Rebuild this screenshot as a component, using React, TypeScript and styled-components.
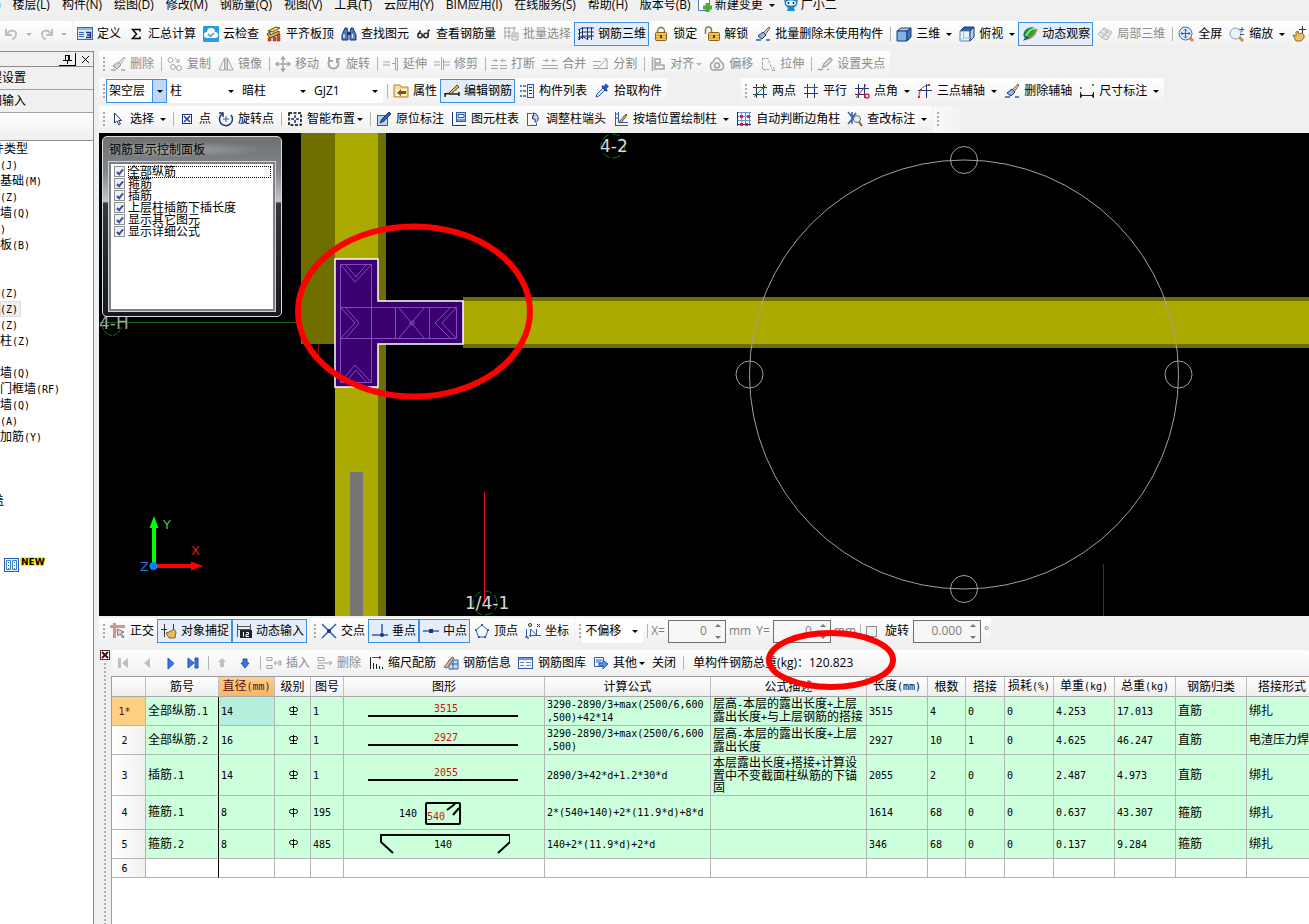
import React from "react";
import styled, { createGlobalStyle, css } from "styled-components";

const GlobalStyle = createGlobalStyle`
  *, *::before, *::after { box-sizing: border-box; }
  body {
    margin: 0;
    background: #f0f0f0;
    color: #000;
    font: 12px/16px "Open Sans", "Noto Sans CJK SC", sans-serif;
    overflow: hidden;
  }
  button, select, input { font: inherit; color: inherit; }
  svg { display: block; flex: none; }
`;

const MONO = `"DejaVu Sans Mono", "Noto Sans CJK SC", monospace`;

/* ---------- icons ---------- */

const blue = "#2c5fae";
const navy = "#1f3470";

const icons: Record<string, React.ReactNode> = {
  undo: <path d="M2 3v6h6M3 8c3-5 9-4 9 0 0 3-2 5-4 5" fill="none" stroke="#888" strokeWidth="2" />,
  redo: <path d="M13 3v6H7M12 8C9 3 3 4 3 8c0 3 2 5 4 5" fill="none" stroke="#888" strokeWidth="2" />,
  define: (
    <>
      <rect x="0.500" y="1.500" width="15" height="12" fill="#dbe8fa" stroke="#3a66b0" />
      <path d="M1 2h14v2H1z" fill="#8fb4e8" />
      <path d="M2 6.500h5M2 8.500h5M2 10.500h5" stroke="#3a66b0" />
      <path d="M9 6.500h4.500v5H9M10 9h3" fill="none" stroke={navy} strokeWidth="1.500" />
    </>
  ),
  sigma: <path d="M12 5.500V3.500H4.500L8.500 8l-4 4.500H12v-2" fill="none" stroke="#000" strokeWidth="1.500" />,
  cloudCheck: (
    <>
      <rect width="16" height="16" rx="1" fill="#2d9be0" />
      <path d="M4 12a3 3 0 0 1 0-6 4 4 0 0 1 8 0 3 3 0 0 1 0 6z" fill="#fff" />
      <path d="M5 8l2.500 2.500L11 7" fill="none" stroke="#2d9be0" strokeWidth="1.500" />
    </>
  ),
  slab: (
    <>
      <path d="M2 5l8-4 4 1-7 4z" fill="#f5d060" stroke="#6a4a10" />
      <path d="M1 8l3-2v3l9-4v3L4 12z" fill="#ecc050" stroke="#4a3210" />
      <path d="M2 12h3v3H2zM7 11h3v4H7zM11 8h3v7h-3z" fill="#c85020" stroke="#7a2a10" strokeWidth="0.500" />
    </>
  ),
  binoculars: (
    <>
      <path d="M4 2h2l1 4v8H1V9zM12 2h-2L9 6v8h6V9z" fill="#4a7ac8" stroke={navy} />
      <path d="M6 6h4v3H6z" fill={navy} />
      <path d="M3 8v4M11.500 8v4" stroke="#d8e8fc" strokeWidth="1.500" />
    </>
  ),
  glasses: (
    <g fill="none" stroke="#333" strokeWidth="1.500">
      <circle cx="4" cy="9.500" r="2.200" /><circle cx="10" cy="9.500" r="2.200" />
      <path d="M6 9.500h2M1.800 9L4.500 4.500M12.200 10.500V4.500L14 4" />
    </g>
  ),
  batch: (
    <>
      <path d="M1 2h12M1 6h7M1 10h7M2 1v12M6 1v12M11 1v5" stroke="#555" fill="none" />
      <path d="M9 7h6v7H9zM10 9h4M10 11h4" stroke="#555" fill="none" />
    </>
  ),
  rebar3d: <path d="M0 4l4-2h12M0 8l4-2h12M0 12l4-2h12M0 14l4-3M1.500 3v11M4.500 1v12M9.500 1v13M13.500 1v13M4 10l5 3 4-3" fill="none" stroke={navy} />,
  lock: (
    <>
      <path d="M4.500 8V5a3.500 3.500 0 0 1 7 0v3" fill="none" stroke="#8a7a50" strokeWidth="1.500" />
      <rect x="2.500" y="6.500" width="11" height="8" rx="1" fill="#f0c850" stroke="#8a6410" />
      <path d="M3 9.500h10M3 12h10" stroke="#d8a030" />
      <path d="M8 9v3" stroke="#5a3a00" strokeWidth="2" />
    </>
  ),
  unlock: (
    <>
      <path d="M1.500 8V4a3 3 0 0 1 6 0v3" fill="none" stroke="#8a7a50" strokeWidth="1.500" />
      <rect x="4.500" y="6.500" width="11" height="8" rx="1" fill="#f0c850" stroke="#8a6410" />
      <path d="M5 9.500h10M5 12h10" stroke="#d8a030" />
      <path d="M10 9v3" stroke="#5a3a00" strokeWidth="2" />
    </>
  ),
  brush: (
    <>
      <path d="M14 1l1 1-5 7-2-2z" fill="#e8c890" stroke="#765" />
      <path d="M8 6l3 3-4 4-4-3z" fill="#8fb4ec" stroke={navy} />
      <path d="M1 14h5M11 14h4" stroke={blue} strokeWidth="1.500" />
    </>
  ),
  cube: (
    <>
      <path d="M1 5l4-3h10l-4 3z" fill="#b8dcf8" stroke={navy} />
      <path d="M1 5h10v10H1z" fill="#7cb4e8" stroke={navy} />
      <path d="M11 5l4-3v9l-4 4z" fill="#3c78b8" stroke={navy} />
    </>
  ),
  cubeTop: (
    <>
      <path d="M1 5l4-4h10l-4 4z" fill="#2864a8" stroke={navy} />
      <path d="M1 5h10v10H1z" fill="#e8f4fc" stroke="#5a8ab8" />
      <path d="M11 5l4-4v10l-4 4z" fill="#a8d0f0" stroke={navy} />
      <path d="M4.500 6v6L1 15M4 12h7" fill="none" stroke="#9bc0dc" />
    </>
  ),
  orbit: (
    <>
      <ellipse cx="8.500" cy="7" rx="6.500" ry="4.500" transform="rotate(-35 8 8)" fill="#28a048" stroke="#186830" />
      <path d="M4 10C7 4 11 2 14 3" stroke="#90f0a0" fill="none" strokeWidth="1.500" />
      <path d="M3 13c5 1 10-4 12-10" stroke="#c88a20" fill="none" strokeWidth="1.500" />
      <path d="M1 15l3-5 3 2z" fill="#205090" />
    </>
  ),
  local3d: (
    <g fill="#ddd" stroke="#777">
      <path d="M1 8l6-6 4 2-6 8zM5 12l6-8 4 2-5 8z" /><path d="M3 6l9 5M6 3l7 5" />
    </g>
  ),
  fullscreen: (
    <>
      <path d="M11 11l4 4" stroke="#c89040" strokeWidth="3" />
      <circle cx="7.500" cy="7.500" r="6.500" fill="#dceafc" stroke="#4a6a9a" />
      <path d="M7.500 3v9M3 7.500h9M6 4.500L7.500 3 9 4.500M6 10.500L7.500 12 9 10.500M4.500 6L3 7.500 4.500 9M10.500 6L12 7.500 10.500 9" fill="none" stroke={blue} />
    </>
  ),
  zoom: (
    <>
      <path d="M10 11l4 4" stroke="#c89040" strokeWidth="3" />
      <circle cx="6.500" cy="7.500" r="5.500" fill="#e8f2fc" stroke="#8a9ab0" />
      <path d="M13 1v5M10.500 3.500h5M11 8.500h4" stroke={blue} />
    </>
  ),
  hand: (
    <>
      <path d="M1 9l3 1V6l2-1 1 3 3-1 2 2v3l-3 3H4z" fill="#ecc06a" stroke="#9a6a20" />
      <path d="M10.500 0v7M7 3.500h7" stroke="#333" />
    </>
  ),
  copy: (
    <g fill="none" stroke="#555">
      <circle cx="3.500" cy="4" r="2.500" /><circle cx="6" cy="11" r="2.500" /><circle cx="12" cy="12" r="2.500" /><path d="M8 2l4 4M12 3v3H9" />
    </g>
  ),
  mirror: <path d="M6.500 2v12H1zM9.500 2v12H15zM8 1v14" fill="none" stroke="#555" />,
  move: <path d="M8 1v14M1 8h14M6 3.500L8 1l2 2.500M6 12.500L8 15l2-2.500M3.500 6L1 8l2.500 2M12.500 6L15 8l-2.500 2" fill="none" stroke="#555" strokeWidth="1.500" />,
  rotate: <path d="M4 4a5 5 0 1 0 7 0M3 1v4h4M11 7V3h3" fill="none" stroke="#555" strokeWidth="2" />,
  extend: <path d="M0 6h7M0 9h7M9 7.500h3M12.500 2v12h2V2z" fill="none" stroke="#555" />,
  trim: <path d="M0 6h6M0 9h6M10 6h6M10 9h6M7.500 1v13M9.500 3v11" fill="none" stroke="#555" />,
  breakIt: <path d="M0 9.500h7M9 9.500h7M0 12.500h7M9 12.500h7M1 4.500h5M10 4.500h5M4 2.500l2 2-2 2M12 2.500l-2 2 2 2" fill="none" stroke="#555" />,
  merge: <path d="M0 9.500h16M0 12.500h16M1 4.500h5M10 4.500h5M4 2.500l2 2-2 2M12 2.500l-2 2 2 2" fill="none" stroke="#555" />,
  split: <path d="M0 5.500h8M0 12.500h15M0 9.500h5M5 12L14 2M14 4v9M11 2l4 3" fill="none" stroke="#555" />,
  align: <path d="M2.500 1v14M5 3h5v4H5zM5 9h9v4H5z" fill="none" stroke="#555" strokeWidth="1.500" />,
  offset: (
    <g fill="none" stroke="#555" strokeWidth="1.500">
      <path d="M8 2c3 0 3 3 4 4 4 2 3 8-1 8H5c-4 0-5-6-1-8 1-1 1-4 4-4z" /><circle cx="8" cy="9.500" r="2.500" />
    </g>
  ),
  stretch: <path d="M2.500 2v11.500H9M2 2.500h6l4 11M12 14.500h3M13 11l2 3" fill="none" stroke="#555" strokeDasharray="3 1" />,
  grip: <path d="M1 13.500h5M13 2L7 8l-1 3 3-1 6-6zM10 13.500h2" fill="none" stroke="#555" strokeWidth="1.500" />,
  props: (
    <>
      <path d="M1 2h6l1 2h7v10H1z" fill="#f8dc90" stroke="#b08830" />
      <path d="M3 6h10v7H3z" fill="#fff6d8" />
      <path d="M4 10l4-4v2h5v3H8v2z" fill="#7a5418" />
    </>
  ),
  editBar: (
    <>
      <path d="M1 12c2-3 4-1 5-1h9M1 10v4M15 9v4" fill="none" stroke="#222" strokeWidth="1.500" />
      <path d="M5 10l8-8 2 2-8 7z" fill="#e8b860" stroke="#5a4010" />
    </>
  ),
  list: (
    <>
      <path d="M1 3h2M1 8h2M1 13h2M4 3h3M4 8h3M4 13h3" stroke={blue} strokeWidth="1.500" />
      <rect x="8.500" y="1.500" width="6" height="13" fill="#e8f1fc" stroke={blue} />
      <path d="M10 4.500h3M10 7.500h3M10 10.500h3" stroke={navy} />
    </>
  ),
  dropper: (
    <>
      <path d="M2 14l1-3 6-6 2 2-6 6z" fill="#cfe4fa" stroke={blue} />
      <path d="M8 3l5 5" stroke={navy} strokeWidth="2" />
      <path d="M10 5.500L13.500 2" stroke="#2858b8" strokeWidth="4" />
    </>
  ),
  axis2: (
    <>
      <path d="M1 4.500h14M1 11.500h14M4.500 1v14M11.500 1v14" stroke={navy} />
      <path d="M2 14L14 2" stroke="#3a8a3a" />
      <path d="M4 4h1M11 11h1" stroke="#d02020" strokeWidth="2" />
    </>
  ),
  parallel: (
    <>
      <path d="M4.500 1v14M11.500 1v14" stroke={navy} />
      <path d="M1 4.500h14" stroke="#c02040" />
      <path d="M1 10.500h14" stroke={navy} />
    </>
  ),
  angle: (
    <>
      <path d="M1 5.500h14M1 11.500h10M4.500 1v14M10.500 1v14" stroke={navy} />
      <path d="M2 15L12 2" stroke="#c02040" />
      <circle cx="13" cy="13" r="2" fill="none" stroke="#e02040" strokeWidth="1.500" />
    </>
  ),
  arc3: (
    <>
      <path d="M1 7.500h14M9.500 1v14" stroke={navy} />
      <path d="M2 14C2 7 5 3 12 2" fill="none" stroke="#d02020" />
      <path d="M1 13h2v2H1zM3 6h2v2H3zM11 1h2v2h-2z" fill="#d02020" />
    </>
  ),
  dimension: (
    <>
      <path d="M1.500 9v6M14.500 9v6M1 12.500h14M3 11l-2 1.500L3 14M13 11l2 1.500L13 14" fill="none" stroke="#222" />
      <path d="M1 4h2v2H1zM13 1h2v2h-2z" fill="#3aa04a" />
    </>
  ),
  pointer: <path d="M4.500 2v10l2.500-2 2 4 1.500-1-2-3.500h3z" fill="#fff" stroke={navy} />,
  point: (
    <>
      <rect x="3.500" y="3.500" width="9" height="9" fill="#fff" stroke={navy} />
      <path d="M5 5l6 6M11 5l-6 6" stroke="#2030c0" strokeWidth="1.500" />
    </>
  ),
  rotatePoint: (
    <>
      <path d="M4 3a6.500 6.500 0 1 0 9 1M1 2h4v4" fill="none" stroke={navy} strokeWidth="1.500" />
      <path d="M8 5v6M5 8h6" stroke={blue} />
    </>
  ),
  smart: (
    <>
      <rect x="2" y="2" width="12" height="12" fill="none" stroke="#000" strokeWidth="1.500" strokeDasharray="3 1.500" />
      <path d="M8 4v3M8 9v3M4 8h3M9 8h3" stroke={navy} strokeWidth="1.500" />
    </>
  ),
  annotate: (
    <>
      <rect x="1.500" y="4.500" width="10" height="10" fill="#b9d2f0" stroke={blue} />
      <path d="M4 12l2-4 7-7 2 2-7 7z" fill="#2c5fae" stroke={navy} />
    </>
  ),
  table: (
    <>
      <path d="M1.500 1v13.500H15" fill="none" stroke={navy} />
      <rect x="5.500" y="1.500" width="9" height="9" fill="#c8dcf8" stroke={blue} />
      <path d="M7 3.500h6v3H7z" fill="#fff" stroke={blue} />
      <path d="M6 9h8" stroke={blue} />
    </>
  ),
  adjust: (
    <>
      <path d="M1.500 2v12.500h9V12M1.500 2.500H6" fill="none" stroke={blue} />
      <path d="M7 2c6 0 7 9 2 9V8H6.500V5H8z" fill="#c8dcf8" stroke={navy} />
    </>
  ),
  wall: (
    <>
      <path d="M2.500 1v14M5.500 1v10.500H15M2 14.500h13M2 3h4M2 7h4" fill="none" stroke={blue} />
      <path d="M6 11L13 3l1 1-6 8z" fill="#e8b860" stroke="#6a4818" />
    </>
  ),
  autoCol: (
    <>
      <path d="M1 1.500h14M1 5.500h14M1 9.500h14M1.500 1v14M5.500 1v14M9.500 1v14M13.500 1v14M1 13.500h14" stroke="#6a92d0" />
      <path d="M1 13.500h14M1.500 1v14" stroke={navy} />
      <path d="M4 4h3v3H4zM11 4h3v3h-3zM4 12h3v3H4zM9 12h3v3H9z" fill="#e02030" />
    </>
  ),
  inspect: (
    <>
      <path d="M1 1l5 6-5 6M5 1v12M5 7l4-5" fill="none" stroke={blue} strokeWidth="1.500" />
      <circle cx="10" cy="8" r="3.500" fill="#e0f0fc" stroke="#666" />
      <path d="M12 11l3 4" stroke="#8a5a20" strokeWidth="2" />
    </>
  ),
  newDoc: (
    <>
      <path d="M1.500 0v13.500h11V0" fill="#fff" stroke="#4a80c0" />
      <path d="M10.500 6v9M6 10.500h9" stroke="#48b030" strokeWidth="4" />
    </>
  ),
  mascot: (
    <>
      <path d="M1 2l2-2h10l2 2-1 6-3 3 1 3H4l1-3-3-3z" fill="#1e88d8" />
      <ellipse cx="8" cy="6" rx="5" ry="2.500" fill="#fff" />
      <path d="M5.500 5v2M10.500 5v2" stroke="#111" strokeWidth="1.500" />
    </>
  ),
  ortho: (
    <>
      <path d="M0 3.500h15M4.500 0v15" stroke="#d89090" strokeWidth="3" />
      <path d="M7 6l7 3-3 1 3 4-1 1-3-4-2 2z" fill="#ddd" stroke="#777" />
    </>
  ),
  snap: (
    <>
      <path d="M3.500 1v13M0 6.500h6M12.500 1v6" stroke="#333" />
      <path d="M5 10l3-1 5-3 2 3-1 6H8z" fill="#e8b860" stroke="#8a6420" />
    </>
  ),
  dynIn: (
    <>
      <path d="M1.500 1v13M1 3.500h14M14.500 1v5M1 6.500h14" stroke="#555" />
      <rect x="4" y="7" width="12" height="8" fill="#222" />
      <path d="M7.500 9v4.500M10 9.500h2.500v2H10v2h3" fill="none" stroke="#fff" />
    </>
  ),
  cross: (
    <>
      <path d="M1 1l14 14M15 1L1 15" stroke={blue} strokeWidth="1.500" />
      <circle cx="8" cy="8" r="2" fill={navy} />
    </>
  ),
  perp: (
    <>
      <path d="M10 1v11M0 12h16" stroke={blue} strokeWidth="1.500" />
      <circle cx="10" cy="12" r="2" fill={navy} />
    </>
  ),
  mid: (
    <>
      <path d="M0 8h16" stroke={blue} strokeWidth="1.500" />
      <rect x="6" y="6" width="4" height="4" fill={navy} />
    </>
  ),
  vertex: (
    <>
      <path d="M8 2l6 5-2.500 7h-7L2 7z" fill="none" stroke={blue} />
      <path d="M7 1h2v2H7zM13 6h2v2h-2zM1 6h2v2H1zM4 13h2v2H4zM10 13h2v2h-2z" fill={blue} />
    </>
  ),
  coord: (
    <>
      <path d="M1.500 6v8M5.500 14V6l6 6V6M4 12.500h12" fill="none" stroke={blue} />
      <path d="M12 1l3 3M15 1l-3 3M0 14h3v2" fill="none" stroke="#333" />
      <circle cx="5" cy="2" r="1.500" fill="none" stroke="#333" />
    </>
  ),
  first: <path d="M2 3h3v10H2zM12 3v10L6 8z" fill="#888" />,
  prev: <path d="M11 3v10L5 8z" fill="#888" />,
  next: <path d="M6 3v11l6-5.500z" fill="#3a78e0" stroke="#1f50b0" />,
  last: <path d="M3 3v10l6-5zM10 3h3v10h-3z" fill="#3a78e0" stroke="#1f50b0" />,
  up: <path d="M8 3l4 4h-2v5H6V7H4z" fill="#888" />,
  down: <path d="M8 13l4-5h-2V4H6v4H4z" fill="#3a78e0" stroke="#1f50b0" />,
  insert: <path d="M1 2.500h5v3H1zM1 10.500h5v3H1zM8 8h7M10 6L8 8l2 2M12 6h3v4h-3" fill="none" stroke="#555" />,
  remove: <path d="M1 2.500h6v3H1zM1 10.500h6v3H1zM1 8h14M12 6l3 2-3 2" fill="none" stroke="#555" />,
  scale: (
    <>
      <path d="M2.500 2v12M5.500 8v6M8.500 9v5M11.500 11v3M14.500 12v2" stroke="#222" />
      <path d="M4 2.500h9M11 1l2 1.500L11 4" fill="none" stroke="#c02020" />
    </>
  ),
  info: (
    <>
      <path d="M6 5h9v9H6zM6 9h9M10 5v9" fill="#c8dcf8" stroke={blue} />
      <path d="M1 12l8-10 2 1-7 10z" fill="#e8b880" stroke="#666" />
    </>
  ),
  library: (
    <>
      <rect x="0.500" y="2.500" width="14" height="11" fill="#f4f8fe" stroke={blue} />
      <path d="M1 4h13" stroke="#6a9ae0" strokeWidth="2" />
      <path d="M2 7.500h4M8 7.500h5M2 10.500h4M8 10.500h5" stroke="#789" />
    </>
  ),
  other: (
    <>
      <path d="M1.500 2.500h9v9h-9zM3 5h6M3 7h5" fill="#f0f4fc" stroke={blue} />
      <path d="M6 8h4V5l5 4-5 5v-3H6z" fill="#5a90e8" stroke={blue} />
    </>
  ),
  column: (
    <>
      <rect x="0.500" y="1.500" width="14" height="13" fill="#e4f1ff" stroke={blue} />
      <path d="M2.500 3.500h4v9h-4zM8.500 3.500h4v9h-4z" fill="#fff" stroke="#3c80d0" />
      <path d="M4.500 5v7M10.500 5v7" stroke={blue} strokeDasharray="1 2" />
    </>
  ),
};

const Icon = ({ name }: { name: string }) => (
  <svg width="16" height="16" viewBox="0 0 16 16" overflow="visible" aria-hidden="true">{icons[name]}</svg>
);

/* ---------- shared parts ---------- */

const Page = styled.div`
  min-height: 100vh;
  display: flex;
  flex-direction: column;
`;

const MenuBar = styled.nav`
  display: flex;
  gap: 6px;
  height: 20px;
  margin-left: -3px;
  padding-bottom: 10px;
  line-height: 10px;
  align-items: center;
  white-space: nowrap;
`;

const MenuGroup = styled.div<{ $gap: number }>`
  display: flex;
  gap: ${(p) => p.$gap}px;
`;

const MenuItem = styled.button`
  display: flex;
  align-items: center;
  gap: 2px;
  height: 10px;
  padding: 0;
  border: 0;
  background: none;
`;

const Strip = styled.div<{ $h?: number }>`
  display: flex;
  align-items: center;
  gap: 1px;
  height: ${(p) => p.$h ?? 28}px;
`;

const Bar = styled.div<{ $fill?: boolean; $start?: boolean }>`
  display: flex;
  align-items: center;
  flex: ${(p) => (p.$fill ? "1 0 auto" : "none")};
  height: 26px;
  padding-right: 2px;
  padding-left: ${(p) => (p.$start ? 0 : 2)}px;
  background: linear-gradient(#fff, #f8f8f8 50%, #efefef);
  border-radius: 2px;
`;

const EmptyBar = styled(Bar)`
  width: 32px;
  background: linear-gradient(90deg, #fafafa, #f0f0f0);
`;

const Gap = styled.div`
  width: 72px;
`;

const Grip = styled.span`
  flex: none;
  width: 5px;
  height: 16px;
  background: radial-gradient(circle at 3px 2px, #aaa 1px, transparent 1px) 0 0 / 5px 4px;
`;

const Sep = styled.span`
  flex: none;
  width: 6px;
  height: 14px;
  border-right: 1px solid #b5b5b5;
  margin-right: 1px;
  margin-left: -1px;
`;

const ToolButton = styled.button<{ $on?: boolean }>`
  display: flex;
  align-items: center;
  flex: none;
  gap: 4px;
  height: 24px;
  padding: 0 2px 0 3px;
  border: 1px solid transparent;
  background: none;
  white-space: nowrap;
  ${(p) => p.$on && css`
    border-color: #3f8fe0;
    background: #e4eefa;
  `}
  &:disabled {
    color: #8c8c8c;
  }
  &:disabled svg {
    filter: grayscale(1);
    opacity: 0.5;
  }
`;

const ArrowSlot = styled.span<{ $w: number }>`
  display: grid;
  align-items: center;
  justify-content: end;
  width: ${(p) => p.$w}px;
  margin-left: -4px;
`;

const Arrow = ({ dim }: { dim?: boolean }) => (
  <svg width="6" height="3" viewBox="0 0 6 3" aria-hidden="true"><path d="M0 0h6L3 3z" fill={dim ? "#777" : "#000"} /></svg>
);

type ToolProps = { icon?: string; label?: string; name?: string; on?: boolean; off?: boolean; drop?: "split" | "menu" };

const Tool = ({ icon, label, name, on, off, drop }: ToolProps) => (
  <ToolButton $on={on} disabled={off} aria-pressed={on} aria-label={label ? undefined : name}>
    {icon && <Icon name={icon} />}
    {label}
    {drop && <ArrowSlot $w={drop === "split" ? 12 : 8}><Arrow dim={off} /></ArrowSlot>}
  </ToolButton>
);

const Tools = ({ items }: { items: (ToolProps | "|")[] }) => (
  <>{items.map((t, i) => (t === "|" ? <Sep key={i} /> : <Tool key={i} {...t} />))}</>
);

const ComboBox = styled.span<{ $w: number; $active?: boolean }>`
  display: grid;
  align-items: center;
  width: ${(p) => p.$w}px;
  height: 24px;
  border: 1px solid ${(p) => (p.$active ? "#3f8fe0" : "transparent")};
  background: #fff;
  & > * { grid-area: 1 / 1; }
`;

const ComboSelect = styled.select`
  width: 100%;
  height: 22px;
  padding: 0 0 0 2px;
  border: 0;
  appearance: none;
  background: none;
`;

const ComboArrow = styled.span<{ $active?: boolean }>`
  display: grid;
  place-items: center;
  justify-self: end;
  width: 14px;
  height: 22px;
  pointer-events: none;
  ${(p) => p.$active && css`
    background: #bcd9fb;
    border-left: 1px solid #3f8fe0;
  `}
`;

const Combo = ({ value, w, active, name }: { value: string; w: number; active?: boolean; name: string }) => (
  <ComboBox $w={w} $active={active}>
    <ComboSelect aria-label={name}><option>{value}</option></ComboSelect>
    <ComboArrow $active={active}><Arrow /></ComboArrow>
  </ComboBox>
);

const Latin = styled.span`
  font-size: 10px;
`;

/* Half-width runs are set smaller so that each takes half of a Chinese glyph. */
const Mix = ({ text }: { text: string }) => (
  <>
    {text.split(/([\x20-\x7e]+)/).filter(Boolean).map((part, i) =>
      /^[\x20-\x7e]/.test(part) ? <Latin key={i}>{part}</Latin> : part
    )}
  </>
);

/* ---------- left panel ---------- */

const Body = styled.div`
  flex: 1;
  display: grid;
  grid-template-columns: 94px minmax(0, 1fr);
  column-gap: 5px;
  margin-top: 3px;
`;

const Side = styled.aside`
  display: flex;
  flex-direction: column;
  border-right: 1px solid #8c8c8c;
  overflow: hidden;
  font-family: ${MONO};
`;

const SideHead = styled.div`
  display: flex;
  justify-content: flex-end;
  align-items: center;
  gap: 4px;
  height: 16px;
  padding-right: 3px;
  border-top: 1px solid #8c8c8c;
  border-bottom: 1px solid #8c8c8c;
`;

const HeadButton = styled.button<{ $raised?: boolean }>`
  display: grid;
  place-items: center;
  width: ${(p) => (p.$raised ? 17 : 10)}px;
  height: 13px;
  padding: 0;
  border: 0;
  background: none;
  ${(p) => p.$raised && css`box-shadow: inset -1px -1px #000;`}
`;

const SideTab = styled.button`
  height: 23px;
  padding: 0;
  border: 0;
  border-bottom: 1px solid #a0a0a0;
  background: #f0f0f0;
  text-align: left;
  text-indent: -10px;
  white-space: nowrap;
`;

const SideTools = styled.div`
  height: 27px;
  background: linear-gradient(#fff, #efefef);
`;

const Tree = styled.ul`
  flex: 1;
  margin: 0;
  padding: 0;
  border-top: 1px solid #8c8c8c;
  background: #fff;
  list-style: none;
`;

const TreeItem = styled.li<{ $cut?: boolean; $sel?: boolean }>`
  width: max-content;
  height: 16px;
  line-height: 16px;
  text-indent: ${(p) => (p.$cut ? -8 : 0)}px;
  white-space: nowrap;
  ${(p) => p.$sel && css`
    padding-right: 3px;
    background: #f0f0f0;
    box-shadow: inset 0 0 0 1px #dcdcdc;
  `}
`;

const NewItem = styled.li`
  display: flex;
  gap: 1px;
  padding: 48px 0 0 4px;
`;

const NewTag = styled.b`
  font: bold 9px/10px "DejaVu Sans", sans-serif;
  text-shadow: 0 0 1px #fe0, 1px 1px #fe0, -1px -1px #fe0, 1px -1px #fe0, -1px 1px #fe0;
`;

const treeRows = ["件类型", "(J)", "基础(M)", "(Z)", "墙(Q)", ")", "板(B)", "", "", "(Z)", "(Z)", "(Z)", "柱(Z)", "", "墙(Q)", "门框墙(RF)", "墙(Q)", "(A)", "加筋(Y)", "", "", "", "盖"];

/* ---------- drawing area ---------- */

const Main = styled.main`
  display: flex;
  flex-direction: column;
  min-width: 0;
`;

const Canvas = styled.div`
  position: relative;
  height: 483px;
  background: #000;
  overflow: hidden;
`;

const Panel = styled.section`
  position: absolute;
  top: 3px;
  left: 3px;
  width: 180px;
  height: 181px;
  padding: 4px 6px 5px;
  display: flex;
  flex-direction: column;
  gap: 4px;
  border: 1px solid #d8dcdf;
  border-radius: 5px;
  background: linear-gradient(#6e7173, #85888a 20%, #c4c7c9 36%, #35383c 37%, #23272c 70%, #16191e);
`;

const PanelTitle = styled.h2`
  margin: 0;
  height: 17px;
  font: 12px/17px "Open Sans", "Noto Sans CJK SC", sans-serif;
  background: radial-gradient(ellipse at 35% 50%, #a2a4a6, transparent 65%);
`;

const PanelList = styled.div`
  flex: 1;
  padding: 2px 2px 2px 1px;
  border: 2px solid #7d8185;
  outline: 1px solid #d0d3d5;
  background: #fff;
`;

const CheckRow = styled.label<{ $focus?: boolean }>`
  display: flex;
  gap: 3px;
  height: 12px;
  line-height: 12px;
  padding-left: 2px;
  span {
    flex: 1;
    outline: ${(p) => (p.$focus ? "1px dotted #000" : "none")};
    outline-offset: -1px;
    white-space: nowrap;
  }
`;

const Tick = styled.input`
  flex: none;
  appearance: none;
  display: grid;
  place-items: center;
  width: 11px;
  height: 11px;
  margin: 0;
  border: 1px solid #8e8f8f;
  background: #eef1f5;
  &:checked::after {
    content: "";
    width: 4px;
    height: 7px;
    border: solid #3b4f9a;
    border-width: 0 2px 2px 0;
    transform: rotate(40deg);
  }
`;

const checks = ["全部纵筋", "箍筋", "插筋", "上层柱插筋下插长度", "显示其它图元", "显示详细公式"];

const Drawing = () => (
  <svg width="100%" height="483" fontFamily="DejaVu Sans, sans-serif">
    <path d="M0 189.500h202" stroke="#0c6a14" />
    <path d="M3 194l4 6 6 3 6-3 4-6" fill="none" stroke="#0c7a14" strokeDasharray="4 1" />
    <rect x="202" y="0" width="34" height="211" fill="#6f6f00" />
    <rect x="236" y="0" width="43" height="483" fill="#aaaa00" />
    <rect x="279" y="0" width="8" height="483" fill="#6f6f00" />
    <svg x="364" y="164" width="100%" height="51">
      <rect width="100%" height="51" fill="#6f6f00" />
      <rect y="4" width="100%" height="43" fill="#aaaa00" />
    </svg>
    <rect x="251" y="339" width="13" height="144" fill="#757575" />
    <path d="M219.500 211v12" stroke="#7a1000" />
    <path d="M236 126h43v42h85v43h-85v43h-43z" fill="#3a0070" stroke="#fff" strokeWidth="1.500" />
    <g fill="none" stroke="#8448c4">
      <path d="M241.500 131.500h31v118h-31zM241.500 174.500h116v31h-116zM296.500 174v31M330.500 174v31" />
      <path d="M242 132l14 17 16-17M247 132l10 12 10-12M242 249l14-17 16 17M247 249l10-12 10 12" />
      <path d="M242 175l14 15-14 15M247 175l13 15-13 15M357 175l-14 15 14 15M351 175l-15 15 15 15" />
      <path d="M300 175l25 30M325 175l-25 30" />
      <circle cx="313" cy="190" r="2" />
    </g>
    <g fill="none" stroke="#a0a0a0">
      <circle cx="865" cy="241.500" r="214.500" />
      <circle cx="865" cy="27" r="13.500" />
      <circle cx="1079.500" cy="241.500" r="13.500" />
      <circle cx="865" cy="456" r="13.500" />
      <circle cx="650.500" cy="241.500" r="13.500" />
    </g>
    <g fill="none" stroke="#0c7a14">
      <circle cx="514" cy="13" r="12" strokeDasharray="8 3" />
      <circle cx="386" cy="470" r="12" strokeDasharray="8 3" />
    </g>
    <path d="M385.500 359v112" stroke="#e01020" />
    <path d="M1004.500 431v52" stroke="#a80010" />
    <g fill="#d8d8d8" fontSize="17">
      <text x="501" y="19">4-2</text>
      <text x="366" y="476">1/4-1</text>
      <text x="0" y="196" fill="#a0a0a0">4-H</text>
    </g>
    <path d="M55 433v-40" stroke="#0f0" strokeWidth="4" />
    <path d="M50.500 395L55 383l4.500 12z" fill="#0f0" />
    <path d="M55 433h40" stroke="#f00" strokeWidth="4" />
    <path d="M92 428.500l12 4.500-12 4.500z" fill="#f00" />
    <circle cx="54.500" cy="433" r="4" fill="#0a80ff" />
    <g fontSize="13">
      <text x="64" y="396" fill="#40c840">Y</text>
      <text x="92" y="422" fill="#d02020">X</text>
      <text x="41" y="438" fill="#2870d0">Z</text>
    </g>
    <ellipse cx="315" cy="178.500" rx="116" ry="85" fill="none" stroke="#f00" strokeWidth="6" />
  </svg>
);

/* ---------- status and edit bars ---------- */

const Lower = styled.section`
  position: relative;
  flex: 1;
  display: flex;
  flex-direction: column;
`;

const Ring = styled.svg`
  position: absolute;
  top: 13px;
  left: 666px;
  pointer-events: none;
`;

const Field = styled.label`
  display: flex;
  align-items: center;
  gap: 3px;
  padding-left: 2px;
  color: #808080;
`;

const SpinBox = styled.span<{ $w: number }>`
  display: flex;
  width: ${(p) => p.$w}px;
  height: 23px;
  border: 1px solid #6e6e6e;
  background: #f6f6f6;
`;

const SpinInput = styled.input`
  flex: 1;
  min-width: 0;
  padding: 0 4px 0 0;
  border: 0;
  background: none;
  text-align: right;
`;

const SpinArrows = styled.span`
  display: flex;
  flex-direction: column;
  justify-content: space-between;
  align-items: center;
  width: 14px;
  padding: 3px 0;
  svg:first-child { transform: rotate(180deg); }
`;

const Spin = ({ w, value, name }: { w: number; value: string; name: string }) => (
  <SpinBox $w={w}>
    <SpinInput aria-label={name} defaultValue={value} />
    <SpinArrows><Arrow dim /><Arrow dim /></SpinArrows>
  </SpinBox>
);

const RotateCheck = styled.label`
  display: flex;
  align-items: center;
  gap: 8px;
  padding: 0 2px 0 4px;
`;

const Dock = styled.div`
  flex: 1;
  display: grid;
  grid-template-columns: 13px minmax(0, 1fr);
  margin-top: 4px;
`;

const DockEdge = styled.div`
  display: flex;
  flex-direction: column;
  gap: 2px;
  padding: 0 1px;
  &::after {
    content: "";
    flex: 1;
    margin: 0 3px;
    background: radial-gradient(circle at 2px 2px, #b0b0b0 1px, transparent 1px) 0 0 / 4px 4px;
  }
`;

const DockClose = styled.button`
  width: 10px;
  height: 10px;
  padding: 0;
  border: 1px solid #4a3030;
  background: #fff;
`;

const DockMain = styled.div`
  min-width: 0;
  display: flex;
  flex-direction: column;
`;

const Total = styled.output`
  padding-left: 8px;
  white-space: nowrap;
`;

/* ---------- rebar table ---------- */

const TableArea = styled.div`
  flex: 1;
  overflow: hidden;
  border-top: 1px solid #9c9c9c;
  border-left: 1px solid #9c9c9c;
  margin-left: -1px;
  background: #fff;
`;

const Grid = styled.table`
  width: 1206px;
  table-layout: fixed;
  border-spacing: 0;
  font: 12px/12px ${MONO};
`;

const ColHead = styled.th<{ $sel?: boolean }>`
  height: 20px;
  padding: 0;
  border-right: 1px solid #c0c0c0;
  border-bottom: 1px solid #a8a8a8;
  background: ${(p) => (p.$sel ? "linear-gradient(#fbd08c, #f5b765)" : "linear-gradient(#fff, #eee)")};
  color: ${(p) => (p.$sel ? "#5a1010" : "#000")};
  font-weight: normal;
  white-space: nowrap;
`;

const RowHead = styled.th<{ $sel?: boolean }>`
  padding: 0 8px 0 0;
  border-right: 1px solid #b4b4b4;
  border-bottom: 1px solid #b4b4b4;
  background: ${(p) => (p.$sel ? "#ffcf82" : "linear-gradient(90deg, #fff, #f0f0f0)")};
  color: ${(p) => (p.$sel ? "#5a1010" : "#000")};
  font-weight: normal;
`;

const Cell = styled.td<{ $center?: boolean; $edge?: boolean; $now?: boolean; $blank?: boolean }>`
  padding: 0 0 0 ${(p) => (p.$center ? 0 : 2)}px;
  border-right: 1px solid ${(p) => (p.$edge ? "#000" : "#b4b4b4")};
  border-bottom: 1px solid #b4b4b4;
  background: ${(p) => (p.$blank ? "#fff" : p.$now ? "#b5eedd" : "#ccffdb")};
  text-align: ${(p) => (p.$center ? "center" : "left")};
  white-space: pre;
  svg { margin: 0 auto; }
`;

const Row = styled.tr<{ $h: number }>`
  height: ${(p) => p.$h}px;
`;

const widths = [34, 73, 56, 36, 33, 201, 166, 156, 61, 38, 39, 49, 61, 61, 71, 71];
const heads = ["", "筋号", "直径(mm)", "级别", "图号", "图形", "计算公式", "公式描述", "长度(mm)", "根数", "搭接", "损耗(%)", "单重(kg)", "总重(kg)", "钢筋归类", "搭接形式"];

const Straight = ({ n }: { n: string }) => (
  <svg width="152" height="20" fontSize="10">
    <text x="78" y="11" textAnchor="middle" fill="#c81808">{n}</text>
    <path d="M0 15h150" stroke="#000" strokeWidth="2" />
  </svg>
);

const Stirrup = () => (
  <svg width="90" height="26" fontSize="10">
    <text x="0" y="17">140</text>
    <rect x="27" y="3" width="34" height="21" rx="1" fill="none" stroke="#000" strokeWidth="2" />
    <path d="M48 10l8-6M54 15l6-7" stroke="#000" strokeWidth="2" />
    <text x="28" y="20" fill="#c81808">540</text>
  </svg>
);

const Hook = () => (
  <svg width="132" height="24" fontSize="10">
    <path d="M15 21L3 10V3h129v7l-12 11" fill="none" stroke="#000" strokeWidth="2" overflow="visible" />
    <text x="65" y="16" textAnchor="middle">140</text>
  </svg>
);

const Grade = ({ ribbed }: { ribbed?: boolean }) => (
  <svg width="10" height="10" fill="none" stroke="#000">
    <rect x="1.500" y="1.500" width="8" height="4" rx="2" />
    <path d="M5.500 0v9" />
    {ribbed && <path d="M2 8.500h7" />}
  </svg>
);

type Rebar = { h: number; cells: string[]; shape: React.ReactNode; ribbed?: boolean };

const rebars: Rebar[] = [
  { h: 29, ribbed: true, shape: <Straight n="3515" />, cells: ["全部纵筋.1", "14", "1", "3290-2890/3+max(2500/6,600\n,500)+42*14", "层高-本层的露出长度+上层\n露出长度+与上层钢筋的搭接", "3515", "4", "0", "0", "4.253", "17.013", "直筋", "绑扎"] },
  { h: 29, ribbed: true, shape: <Straight n="2927" />, cells: ["全部纵筋.2", "16", "1", "3290-2890/3+max(2500/6,600\n,500)", "层高-本层的露出长度+上层\n露出长度", "2927", "10", "1", "0", "4.625", "46.247", "直筋", "电渣压力焊"] },
  { h: 41, ribbed: true, shape: <Straight n="2055" />, cells: ["插筋.1", "14", "1", "2890/3+42*d+1.2*30*d", "本层露出长度+搭接+计算设\n置中不变截面柱纵筋的下锚\n固", "2055", "2", "0", "0", "2.487", "4.973", "直筋", "绑扎"] },
  { h: 34, shape: <Stirrup />, cells: ["箍筋.1", "8", "195", "2*(540+140)+2*(11.9*d)+8*d", "", "1614", "68", "0", "0", "0.637", "43.307", "箍筋", "绑扎"] },
  { h: 29, shape: <Hook />, cells: ["箍筋.2", "8", "485", "140+2*(11.9*d)+2*d", "", "346", "68", "0", "0", "0.137", "9.284", "箍筋", "绑扎"] },
];

const RebarTable = () => (
  <Grid>
    <colgroup>{widths.map((w, i) => <col key={i} width={w} />)}</colgroup>
    <thead>
      <tr>{heads.map((h, i) => <ColHead key={i} $sel={i === 2}><Mix text={h} /></ColHead>)}</tr>
    </thead>
    <tbody>
      {rebars.map((r, i) => (
        <Row key={i} $h={r.h}>
          <RowHead $sel={i === 0}><Mix text={i === 0 ? "1*" : String(i + 1)} /></RowHead>
          <Cell $edge><Mix text={r.cells[0]} /></Cell>
          <Cell $now={i === 0}><Mix text={r.cells[1]} /></Cell>
          <Cell $center><Grade ribbed={r.ribbed} /></Cell>
          <Cell><Mix text={r.cells[2]} /></Cell>
          <Cell $center>{r.shape}</Cell>
          {r.cells.slice(3).map((c, k) => <Cell key={k}><Mix text={c} /></Cell>)}
        </Row>
      ))}
      <Row $h={19}>
        <RowHead><Mix text="6" /></RowHead>
        {widths.slice(1).map((_, k) => <Cell key={k} $blank $edge={k === 0} />)}
      </Row>
    </tbody>
  </Grid>
);

/* ---------- page ---------- */

const menus = [")", "楼层(L)", "构件(N)", "绘图(D)", "修改(M)", "钢筋量(Q)", "视图(V)", "工具(T)", "云应用(Y)", "BIM应用(I)", "在线服务(S)", "帮助(H)", "版本号(B)"];

export default function App() {
  return (
    <Page>
      <GlobalStyle />
      <MenuBar>
        <MenuGroup $gap={12}>
          {menus.map((m) => <MenuItem key={m}>{m}</MenuItem>)}
        </MenuGroup>
        <MenuGroup $gap={8}>
          <MenuItem><Icon name="newDoc" />新建变更<ArrowSlot $w={14}><Arrow /></ArrowSlot></MenuItem>
          <MenuItem><Icon name="mascot" />广小二</MenuItem>
        </MenuGroup>
      </MenuBar>

      <Strip>
        <Bar $start>
          <Tools items={[{ icon: "undo", name: "撤销", off: true, drop: "split" }, { icon: "redo", name: "恢复", off: true, drop: "split" }]} />
        </Bar>
        <Bar $fill $start>
          <Tools
            items={[
              { icon: "define", label: "定义" },
              { icon: "sigma", label: "汇总计算" },
              { icon: "cloudCheck", label: "云检查" },
              { icon: "slab", label: "平齐板顶" },
              { icon: "binoculars", label: "查找图元" },
              { icon: "glasses", label: "查看钢筋量" },
              { icon: "batch", label: "批量选择", off: true },
              { icon: "rebar3d", label: "钢筋三维", on: true },
              { icon: "lock", label: "锁定" },
              { icon: "unlock", label: "解锁" },
              { icon: "brush", label: "批量删除未使用构件" },
              "|",
              { icon: "cube", label: "三维", drop: "split" },
              { icon: "cubeTop", label: "俯视", drop: "split" },
              { icon: "orbit", label: "动态观察", on: true },
              { icon: "local3d", label: "局部三维", off: true },
              "|",
              { icon: "fullscreen", label: "全屏" },
              { icon: "zoom", label: "缩放", drop: "split" },
              { icon: "hand", name: "平移" },
            ]}
          />
        </Bar>
      </Strip>

      <Body>
        <Side>
          <SideHead>
            <HeadButton $raised aria-label="固定">
              <svg width="9" height="9" fill="none" stroke="#000"><path d="M2.500 0v5M2 0.500h4M5.500 0v5M6.500 0v5M0 5.500h9M4.500 6v3" /></svg>
            </HeadButton>
            <HeadButton aria-label="关闭">
              <svg width="9" height="9" stroke="#000"><path d="M1 1l7 7M8 1L1 8" /></svg>
            </HeadButton>
          </SideHead>
          <SideTab>程设置</SideTab>
          <SideTab>图输入</SideTab>
          <SideTools />
          <Tree>
            {treeRows.map((t, i) => (
              <TreeItem key={i} $cut={i === 0 || i === 22} $sel={i === 10}><Mix text={t} /></TreeItem>
            ))}
            <NewItem><Icon name="column" /><NewTag>NEW</NewTag></NewItem>
          </Tree>
        </Side>

        <Main>
          <Strip $h={26}>
            <Bar>
              <Grip />
              <Tools
                items={[
                  { icon: "brush", label: "删除", off: true }, "|",
                  { icon: "copy", label: "复制", off: true },
                  { icon: "mirror", label: "镜像", off: true }, "|",
                  { icon: "move", label: "移动", off: true },
                  { icon: "rotate", label: "旋转", off: true }, "|",
                  { icon: "extend", label: "延伸", off: true },
                  { icon: "trim", label: "修剪", off: true }, "|",
                  { icon: "breakIt", label: "打断", off: true },
                  { icon: "merge", label: "合并", off: true },
                  { icon: "split", label: "分割", off: true }, "|",
                  { icon: "align", label: "对齐", off: true, drop: "menu" },
                  { icon: "offset", label: "偏移", off: true },
                  { icon: "stretch", label: "拉伸", off: true }, "|",
                  { icon: "grip", label: "设置夹点", off: true },
                ]}
              />
            </Bar>
          </Strip>
          <Strip>
            <Bar>
              <Grip />
              <Combo name="楼层" value="架空层" w={61} active />
              <Combo name="构件类型" value="柱" w={72} />
              <Combo name="构件类别" value="暗柱" w={72} />
              <Combo name="构件名称" value="GJZ1" w={72} />
              <Tools
                items={[
                  "|",
                  { icon: "props", label: "属性" },
                  { icon: "editBar", label: "编辑钢筋", on: true },
                  { icon: "list", label: "构件列表" },
                  { icon: "dropper", label: "拾取构件" },
                ]}
              />
            </Bar>
            <Gap />
            <Bar>
              <Grip />
              <Tools
                items={[
                  { icon: "axis2", label: "两点" },
                  { icon: "parallel", label: "平行" },
                  { icon: "angle", label: "点角", drop: "split" },
                  { icon: "arc3", label: "三点辅轴", drop: "split" },
                  { icon: "brush", label: "删除辅轴" },
                  { icon: "dimension", label: "尺寸标注", drop: "split" },
                ]}
              />
            </Bar>
          </Strip>
          <Strip>
            <Bar>
              <Grip />
              <Tools
                items={[
                  { icon: "pointer", label: "选择", drop: "split" }, "|",
                  { icon: "point", label: "点" },
                  { icon: "rotatePoint", label: "旋转点" }, "|",
                  { icon: "smart", label: "智能布置", drop: "menu" }, "|",
                  { icon: "annotate", label: "原位标注" },
                  { icon: "table", label: "图元柱表" },
                  { icon: "adjust", label: "调整柱端头" },
                  { icon: "wall", label: "按墙位置绘制柱", drop: "split" },
                  { icon: "autoCol", label: "自动判断边角柱" },
                  { icon: "inspect", label: "查改标注", drop: "split" },
                ]}
              />
            </Bar>
            <EmptyBar><Grip /></EmptyBar>
          </Strip>

          <Canvas>
            <Drawing />
            <Panel>
              <PanelTitle>钢筋显示控制面板</PanelTitle>
              <PanelList>
                {checks.map((c, i) => (
                  <CheckRow key={c} $focus={i === 0}><Tick type="checkbox" defaultChecked /><span>{c}</span></CheckRow>
                ))}
              </PanelList>
            </Panel>
          </Canvas>

          <Lower>
            <Strip $h={30}>
              <Bar>
                <Grip />
                <Tools
                  items={[
                    { icon: "ortho", label: "正交" },
                    { icon: "snap", label: "对象捕捉", on: true },
                    { icon: "dynIn", label: "动态输入", on: true },
                  ]}
                />
              </Bar>
              <Bar>
                <Grip />
                <Tools
                  items={[
                    { icon: "cross", label: "交点" },
                    { icon: "perp", label: "垂点", on: true },
                    { icon: "mid", label: "中点", on: true },
                    { icon: "vertex", label: "顶点" },
                    { icon: "coord", label: "坐标" },
                  ]}
                />
              </Bar>
              <Bar>
                <Grip />
                <Combo name="偏移方式" value="不偏移" w={61} />
                <Sep />
                <Field>X=<Spin name="X" w={58} value="0" />mm</Field>
                <Field>&nbsp;Y=<Spin name="Y" w={58} value="0" />mm</Field>
                <Sep />
                <RotateCheck><Tick type="checkbox" />旋转</RotateCheck>
                <Field as="span"><Spin name="旋转角度" w={68} value="0.000" />°</Field>
              </Bar>
            </Strip>
            <Dock>
              <DockEdge>
                <DockClose aria-label="关闭面板">
                  <svg width="8" height="8" stroke="#4a1010" strokeWidth="2"><path d="M1 1l6 6M7 1L1 7" /></svg>
                </DockClose>
              </DockEdge>
              <DockMain>
                <Bar $start>
                  <Tools
                    items={[
                      { icon: "first", name: "首条", off: true },
                      { icon: "prev", name: "上一条", off: true },
                      { icon: "next", name: "下一条" },
                      { icon: "last", name: "末条" }, "|",
                      { icon: "up", name: "上移", off: true },
                      { icon: "down", name: "下移" }, "|",
                      { icon: "insert", label: "插入", off: true },
                      { icon: "remove", label: "删除", off: true },
                      { icon: "scale", label: "缩尺配筋" },
                      { icon: "info", label: "钢筋信息" },
                      { icon: "library", label: "钢筋图库" },
                      { icon: "other", label: "其他", drop: "menu" },
                      { label: "关闭" }, "|",
                    ]}
                  />
                  <Total>单构件钢筋总重(kg)：120.823</Total>
                </Bar>
                <TableArea><RebarTable /></TableArea>
              </DockMain>
            </Dock>
            <Ring width="134" height="66" viewBox="0 0 134 66">
              <ellipse cx="66" cy="31" rx="62" ry="27" fill="none" stroke="#f00" strokeWidth="6" />
            </Ring>
          </Lower>
        </Main>
      </Body>
    </Page>
  );
}
